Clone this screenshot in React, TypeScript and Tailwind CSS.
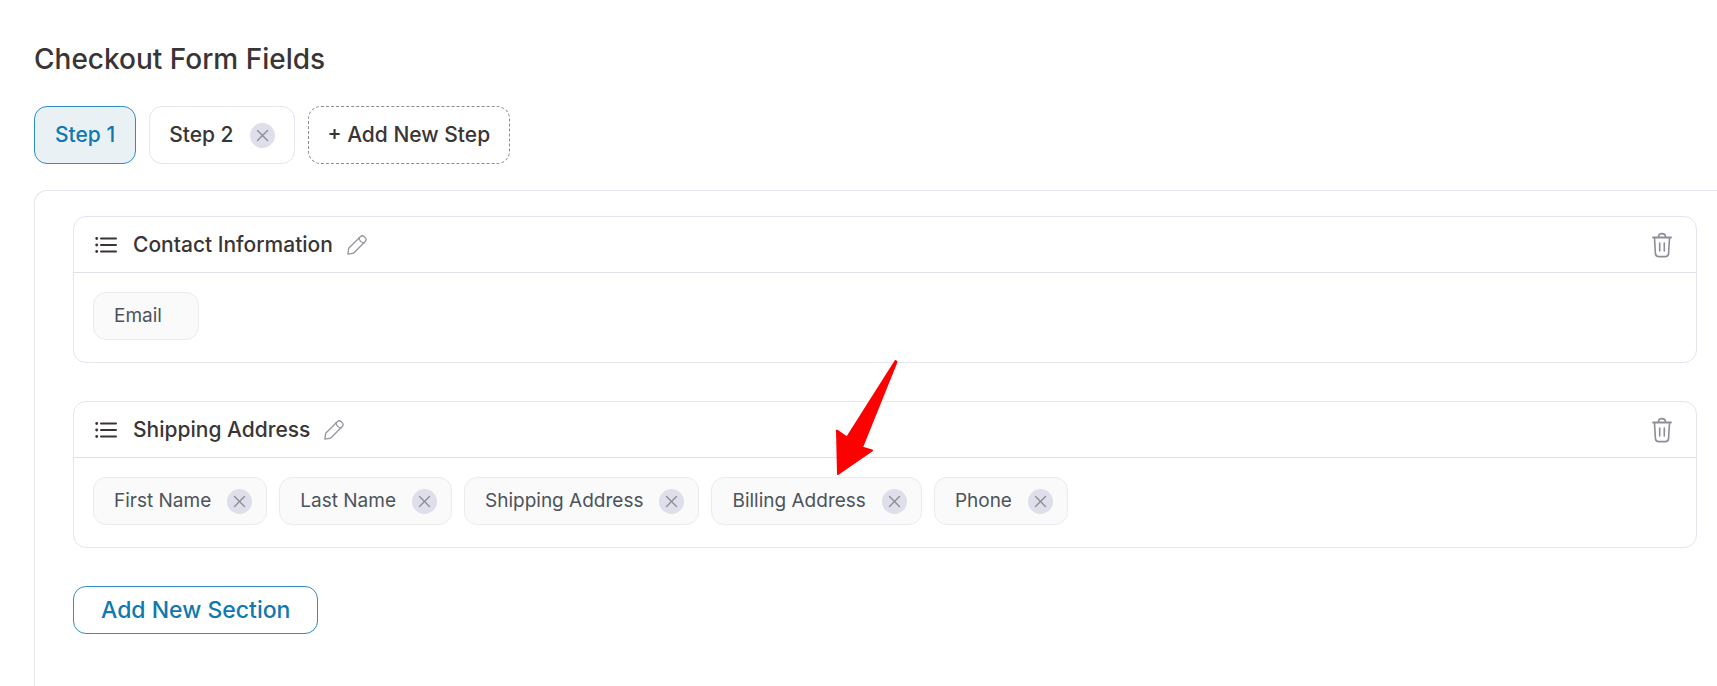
import { useState } from "react";

type Section = {
  id: string;
  title: string;
  fields: { name: string; locked?: boolean; highlighted?: boolean }[];
};

const initialSections: Section[] = [
  {
    id: "contact",
    title: "Contact Information",
    fields: [{ name: "Email", locked: true }],
  },
  {
    id: "shipping",
    title: "Shipping Address",
    fields: [
      { name: "First Name" },
      { name: "Last Name" },
      { name: "Shipping Address" },
      { name: "Billing Address", highlighted: true },
      { name: "Phone" },
    ],
  },
];

function ListIcon() {
  return (
    <svg width="22" height="18" viewBox="0 0 22 18" fill="none" stroke="#3a3535" strokeLinecap="round">
      <path d="M6 2.5h15M6 9h15M6 15.5h15" strokeWidth="2" />
      <path d="M1.7 2.5h.01M1.7 9h.01M1.7 15.5h.01" strokeWidth="2.9" />
    </svg>
  );
}

function PencilIcon() {
  return (
    <svg width="20" height="20" viewBox="0 0 20 20" fill="none" stroke="#9696a0" strokeWidth="1.3" strokeLinejoin="round" strokeLinecap="round">
      <path d="M.9 19.1l.6-4.9c.1-.6.3-1 .7-1.4L13.3 1.7c1.3-1.2 2.8-1.2 4 0l.9.9c1.2 1.2 1.2 2.6 0 3.9L7 17.7c-.4.4-.8.6-1.4.7z" />
      <path d="M12 3c.5 2.8 2.2 4.5 5 5" />
    </svg>
  );
}

function TrashIcon() {
  return (
    <svg width="20" height="26" viewBox="0 0 20 26" fill="none" stroke="#8e8e99" strokeWidth="1.6" strokeLinecap="round">
      <path d="M1 5.5h18" strokeWidth="1.8" />
      <path d="M6.6 5.2v-.7c0-1.8 1.1-2.9 3.4-2.9s3.4 1.1 3.4 2.9v.7" />
      <path d="M2.5 6l.9 15.4c.1 2 1.3 3.2 3.3 3.2h6.6c2 0 3.2-1.2 3.3-3.2L17.5 6" />
      <path d="M7.7 11v8M12.3 11v8" />
    </svg>
  );
}

function RemoveButton({ label, onClick }: { label: string; onClick?: () => void }) {
  return (
    <button
      type="button"
      aria-label={label}
      onClick={onClick}
      className="flex size-[25px] shrink-0 items-center justify-center rounded-full bg-[#dfdeeb]"
    >
      <svg width="13" height="13" viewBox="0 0 13 13" stroke="#8c8c96" strokeWidth="1.4" strokeLinecap="round">
        <path d="M1.5 1.5l10 10M11.5 1.5l-10 10" />
      </svg>
    </button>
  );
}

function PointerArrow() {
  return (
    <svg
      className="pointer-events-none absolute bottom-full left-[123px] mb-0.5"
      width="64"
      height="118"
      viewBox="0 0 64 118"
      fill="#ff0000"
      stroke="#ff0000"
      strokeWidth="2"
      strokeLinejoin="round"
      aria-hidden="true"
    >
      <path d="M60.5 3L12 79.5 2 72.5l1 43.5L37 92.5l-10-3L61.5 4z" />
    </svg>
  );
}

export default function App() {
  const [sections, setSections] = useState(initialSections);

  const removeField = (sectionId: string, name: string) =>
    setSections((list) =>
      list.map((s) =>
        s.id === sectionId ? { ...s, fields: s.fields.filter((f) => f.name !== name) } : s,
      ),
    );

  const removeSection = (id: string) => setSections((list) => list.filter((s) => s.id !== id));

  return (
    <main className="flex min-h-screen flex-col bg-white pl-[34px] pt-10 font-['Inter',sans-serif] text-[#3a3535]">
      <h1 className="text-[28px] font-medium leading-[38px]">Checkout Form Fields</h1>

      <div className="mt-7 flex flex-wrap gap-[13px]">
        <button
          type="button"
          className="h-[58px] rounded-[13px] border border-[#2f8fc0] bg-[#eaf1f5] px-5 text-[21px] font-medium text-[#0f79b0]"
        >
          Step 1
        </button>
        <div className="flex h-[58px] items-center gap-4 rounded-[13px] border border-[#e5e4f0] px-[19px]">
          <button type="button" className="text-[21px] font-medium">
            Step 2
          </button>
          <RemoveButton label="Remove Step 2" />
        </div>
        <button
          type="button"
          className="h-[58px] rounded-[13px] border border-dashed border-[#8c8c94] px-[19px] text-[21px] font-medium"
        >
          + Add New Step
        </button>
      </div>

      <div className="mt-[26px] flex flex-1 flex-col items-start gap-[38px] rounded-tl-[13px] border-l border-t border-[#e5e4f0] pb-10 pl-[38px] pr-5 pt-[25px]">
        {sections.map((section) => (
          <section key={section.id} className="w-full rounded-[13px] border border-[#e5e4f0]">
            <header className="flex h-14 items-center border-b border-[#e1e0ec] pl-[21px] pr-5">
              <ListIcon />
              <h2 className="ml-4 text-[21px] font-medium">{section.title}</h2>
              <button type="button" aria-label={`Rename ${section.title}`} className="ml-3.5">
                <PencilIcon />
              </button>
              <button
                type="button"
                aria-label={`Delete ${section.title}`}
                onClick={() => removeSection(section.id)}
                className="ml-auto mr-1"
              >
                <TrashIcon />
              </button>
            </header>
            <ul className="flex flex-wrap gap-3 px-[19px] pb-[22px] pt-[19px]">
              {section.fields.map((field) => (
                <li
                  key={field.name}
                  className="relative flex h-12 items-center gap-4 rounded-[13px] border border-[#ebebed] bg-[#fafafa] pl-5 pr-[14px] text-[19px] text-[#4c535b]"
                >
                  {field.name}
                  {field.locked ? (
                    <span className="w-1.5" />
                  ) : (
                    <RemoveButton
                      label={`Remove ${field.name}`}
                      onClick={() => removeField(section.id, field.name)}
                    />
                  )}
                  {field.highlighted && <PointerArrow />}
                </li>
              ))}
            </ul>
          </section>
        ))}

        <button
          type="button"
          className="h-12 rounded-[13px] border border-[#2f8fc0] px-[27px] text-[23px] font-medium text-[#0f79b0]"
        >
          Add New Section
        </button>
      </div>
    </main>
  );
}
